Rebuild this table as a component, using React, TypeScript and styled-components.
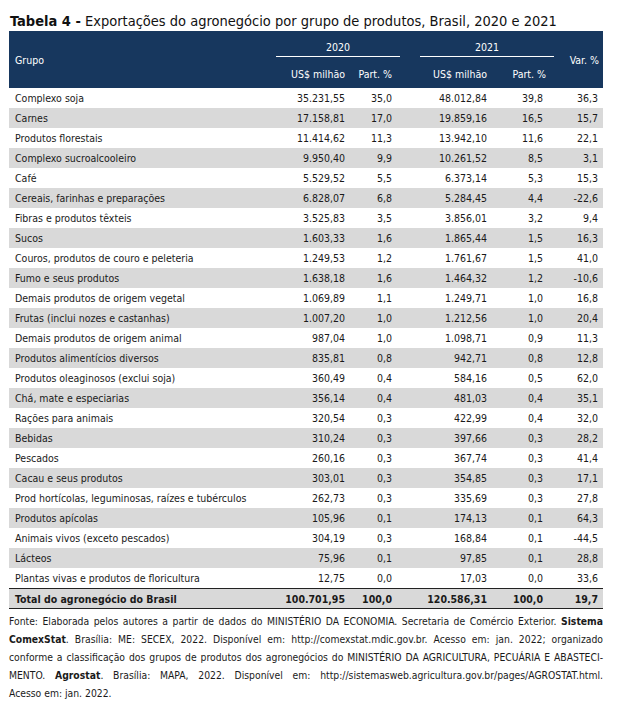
import React from "react";
import styled, { createGlobalStyle } from "styled-components";

const Global = createGlobalStyle`
  html, body { margin: 0; padding: 0; background: #ffffff; }
  body { font-family: "DejaVu Sans Condensed", "DejaVu Sans", sans-serif; color: #1a1a1a; }
`;

const COLS = "267px 74px 50px 20px 72px 62px 49px";

const Page = styled.div`
  width: 594px;
  padding: 11px 0 0 9px;
`;

const Title = styled.h1`
  margin: 0;
  font-size: 14.5px;
  line-height: 20px;
  font-weight: normal;
  color: #111;
  padding-left: 1px;
  b { font-weight: bold; }
`;

const Header = styled.div`
  display: grid;
  grid-template-columns: ${COLS};
  grid-template-rows: 26px 31px;
  background: #17375e;
  color: #ffffff;
  font-size: 10.5px;
`;

const HeadLabel = styled.div<{ $col: string; $align?: string; $pad?: string }>`
  grid-column: ${(p) => p.$col};
  grid-row: 1 / 3;
  display: flex;
  align-items: center;
  justify-content: ${(p) => p.$align || "flex-start"};
  padding: ${(p) => p.$pad || "0 0 0 6px"};
`;

const YearCell = styled.div<{ $col: string }>`
  grid-column: ${(p) => p.$col};
  grid-row: 1;
  display: flex;
  align-items: center;
  justify-content: center;
  padding-top: 6px;
  border-bottom: 1px solid #ffffff;
`;

const SubHead = styled.div<{ $col: number; $pr: number }>`
  grid-column: ${(p) => p.$col};
  grid-row: 2;
  display: flex;
  align-items: center;
  justify-content: flex-end;
  padding: 3px ${(p) => p.$pr}px 0 0;
  white-space: nowrap;
`;

const Row = styled.div<{ $shade?: boolean; $total?: boolean }>`
  display: grid;
  grid-template-columns: ${COLS};
  height: 20px;
  align-items: center;
  font-size: 10.5px;
  background: ${(p) => (p.$shade || p.$total ? "#d9d9d9" : "#ffffff")};
  font-weight: ${(p) => (p.$total ? "bold" : "normal")};
  ${(p) =>
    p.$total &&
    `border-top: 1.5px solid #222; border-bottom: 1.5px solid #222; height: 19px;`}
`;

const Label = styled.div`
  padding-left: 6px;
  white-space: nowrap;
`;

const Num = styled.div<{ $col: number; $pr: number }>`
  grid-column: ${(p) => p.$col};
  text-align: right;
  padding-right: ${(p) => p.$pr}px;
  white-space: nowrap;
`;

const Notes = styled.div`
  font-size: 10.3px;
  line-height: 18px;
  padding-top: 3px;
  color: #1a1a1a;
  b { font-weight: bold; }
`;

const NoteLine = styled.div<{ $last?: boolean }>`
  text-align: ${(p) => (p.$last ? "left" : "justify")};
  text-align-last: ${(p) => (p.$last ? "left" : "justify")};
  white-space: nowrap;
`;

type R = [string, string, string, string, string, string];

const rows: R[] = [
  ["Complexo soja", "35.231,55", "35,0", "48.012,84", "39,8", "36,3"],
  ["Carnes", "17.158,81", "17,0", "19.859,16", "16,5", "15,7"],
  ["Produtos florestais", "11.414,62", "11,3", "13.942,10", "11,6", "22,1"],
  ["Complexo sucroalcooleiro", "9.950,40", "9,9", "10.261,52", "8,5", "3,1"],
  ["Café", "5.529,52", "5,5", "6.373,14", "5,3", "15,3"],
  ["Cereais, farinhas e preparações", "6.828,07", "6,8", "5.284,45", "4,4", "-22,6"],
  ["Fibras e produtos têxteis", "3.525,83", "3,5", "3.856,01", "3,2", "9,4"],
  ["Sucos", "1.603,33", "1,6", "1.865,44", "1,5", "16,3"],
  ["Couros, produtos de couro e peleteria", "1.249,53", "1,2", "1.761,67", "1,5", "41,0"],
  ["Fumo e seus produtos", "1.638,18", "1,6", "1.464,32", "1,2", "-10,6"],
  ["Demais produtos de origem vegetal", "1.069,89", "1,1", "1.249,71", "1,0", "16,8"],
  ["Frutas (inclui nozes e castanhas)", "1.007,20", "1,0", "1.212,56", "1,0", "20,4"],
  ["Demais produtos de origem animal", "987,04", "1,0", "1.098,71", "0,9", "11,3"],
  ["Produtos alimentícios diversos", "835,81", "0,8", "942,71", "0,8", "12,8"],
  ["Produtos oleaginosos (exclui soja)", "360,49", "0,4", "584,16", "0,5", "62,0"],
  ["Chá, mate e especiarias", "356,14", "0,4", "481,03", "0,4", "35,1"],
  ["Rações para animais", "320,54", "0,3", "422,99", "0,4", "32,0"],
  ["Bebidas", "310,24", "0,3", "397,66", "0,3", "28,2"],
  ["Pescados", "260,16", "0,3", "367,74", "0,3", "41,4"],
  ["Cacau e seus produtos", "303,01", "0,3", "354,85", "0,3", "17,1"],
  ["Prod hortícolas, leguminosas, raízes e tubérculos", "262,73", "0,3", "335,69", "0,3", "27,8"],
  ["Produtos apícolas", "105,96", "0,1", "174,13", "0,1", "64,3"],
  ["Animais vivos (exceto pescados)", "304,19", "0,3", "168,84", "0,1", "-44,5"],
  ["Lácteos", "75,96", "0,1", "97,85", "0,1", "28,8"],
  ["Plantas vivas e produtos de floricultura", "12,75", "0,0", "17,03", "0,0", "33,6"],
];

const total: R = ["Total do agronegócio do Brasil", "100.701,95", "100,0", "120.586,31", "100,0", "19,7"];

const numCols: Array<[number, number]> = [
  [2, 5],
  [3, 8],
  [5, 5],
  [6, 11],
  [7, 5],
];

const DataRow = ({ r, shade, isTotal }: { r: R; shade?: boolean; isTotal?: boolean }) => (
  <Row $shade={shade} $total={isTotal}>
    <Label>{r[0]}</Label>
    {numCols.map(([c, pr], i) => (
      <Num key={c} $col={c} $pr={pr}>
        {r[i + 1]}
      </Num>
    ))}
  </Row>
);

export default function App() {
  return (
    <>
      <Global />
      <Page>
        <Title>
          <b>Tabela 4 -</b> Exportações do agronegócio por grupo de produtos, Brasil, 2020 e 2021
        </Title>
        <Header>
          <HeadLabel $col="1">Grupo</HeadLabel>
          <YearCell $col="2 / 4">2020</YearCell>
          <YearCell $col="5 / 7">2021</YearCell>
          <HeadLabel $col="7" $align="flex-end" $pad="0 4px 0 0">
            Var. %
          </HeadLabel>
          <SubHead $col={2} $pr={5}>US$ milhão</SubHead>
          <SubHead $col={3} $pr={8}>Part. %</SubHead>
          <SubHead $col={5} $pr={5}>US$ milhão</SubHead>
          <SubHead $col={6} $pr={8}>Part. %</SubHead>
        </Header>
        {rows.map((r, i) => (
          <DataRow key={r[0]} r={r} shade={i % 2 === 1} />
        ))}
        <DataRow r={total} isTotal />
        <Notes>
          <NoteLine>
            Fonte: Elaborada pelos autores a partir de dados do MINISTÉRIO DA ECONOMIA. Secretaria de Comércio Exterior. <b>Sistema</b>
          </NoteLine>
          <NoteLine>
            <b>ComexStat</b>. Brasília: ME: SECEX, 2022. Disponível em: http://comexstat.mdic.gov.br. Acesso em: jan. 2022; organizado
          </NoteLine>
          <NoteLine>
            conforme a classificação dos grupos de produtos dos agronegócios do MINISTÉRIO DA AGRICULTURA, PECUÁRIA E ABASTECI-
          </NoteLine>
          <NoteLine>
            MENTO. <b>Agrostat</b>. Brasília: MAPA, 2022. Disponível em: http://sistemasweb.agricultura.gov.br/pages/AGROSTAT.html.
          </NoteLine>
          <NoteLine $last>Acesso em: jan. 2022.</NoteLine>
        </Notes>
      </Page>
    </>
  );
}
